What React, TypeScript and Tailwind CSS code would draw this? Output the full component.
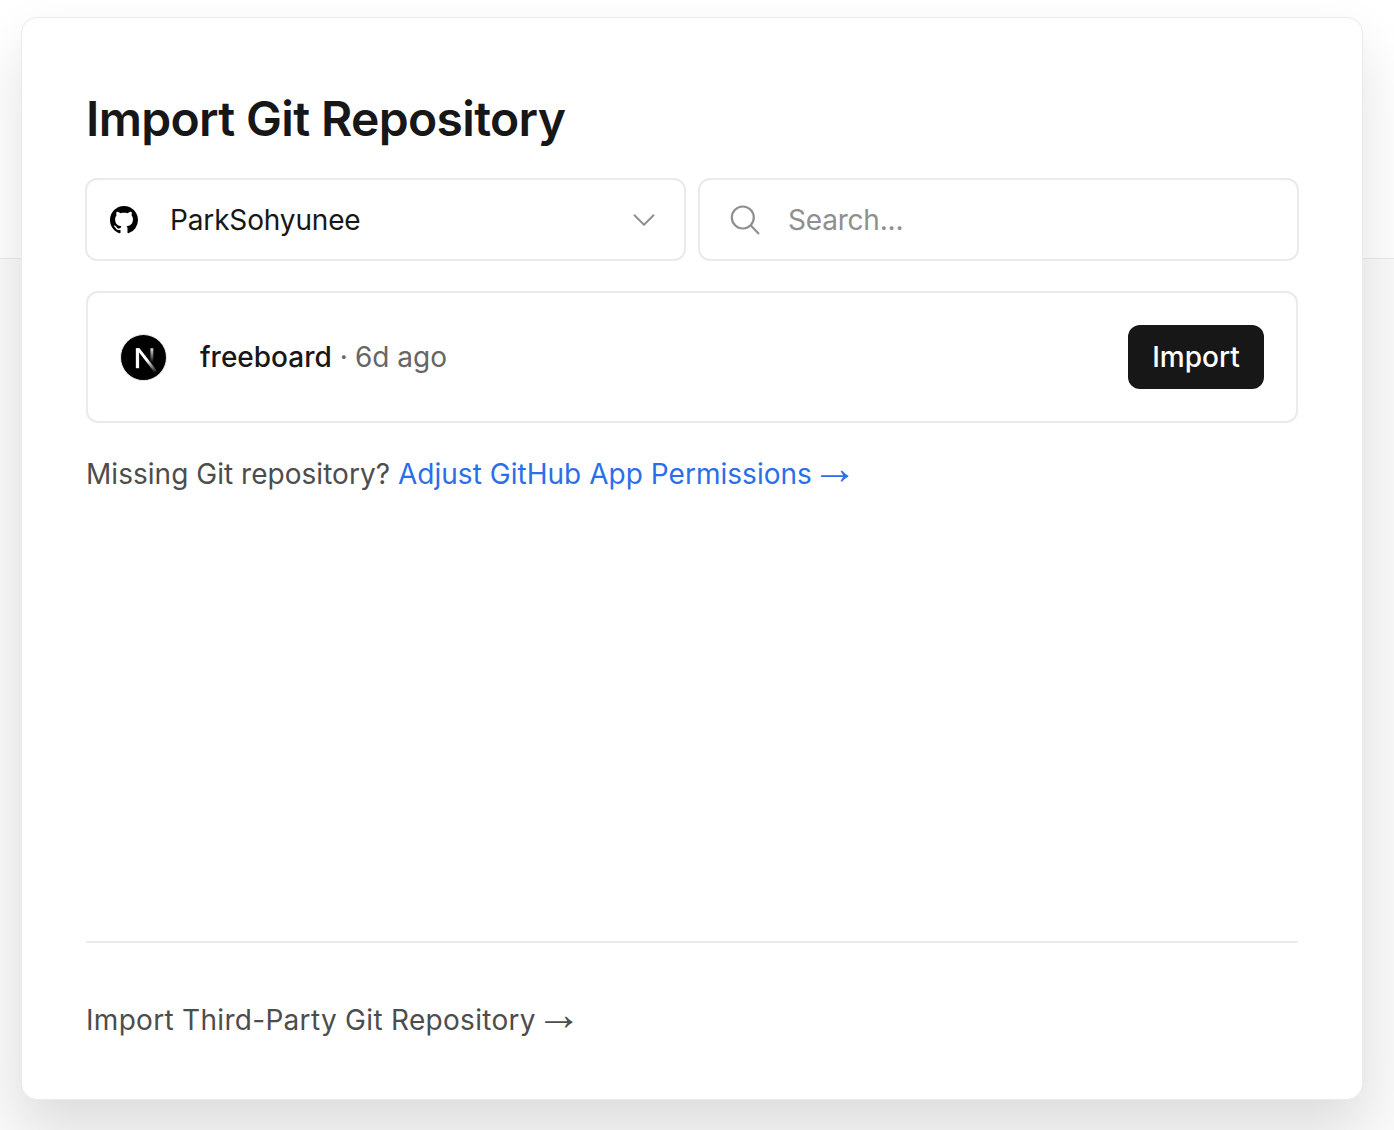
import { ChevronDown } from 'lucide-react';

const GitHubMark = () => (
  <svg viewBox="0 0 16 16" className="w-7 h-7 fill-black">
    <path d="M8 0C3.58 0 0 3.58 0 8c0 3.54 2.29 6.53 5.47 7.59.4.07.55-.17.55-.38 0-.19-.01-.82-.01-1.49-2.01.37-2.53-.49-2.69-.94-.09-.23-.48-.94-.82-1.13-.28-.15-.68-.52-.01-.53.63-.01 1.08.58 1.23.82.72 1.21 1.87.87 2.33.66.07-.52.28-.87.51-1.07-1.78-.2-3.64-.89-3.64-3.95 0-.87.31-1.59.82-2.15-.08-.2-.36-1.02.08-2.12 0 0 .67-.21 2.2.82.64-.18 1.32-.27 2-.27s1.36.09 2 .27c1.53-1.04 2.2-.82 2.2-.82.44 1.1.16 1.92.08 2.12.51.56.82 1.27.82 2.15 0 3.07-1.87 3.75-3.65 3.95.29.25.54.73.54 1.48 0 1.07-.01 1.93-.01 2.2 0 .21.15.46.55.38A8.01 8.01 0 0 0 16 8c0-4.42-3.58-8-8-8z" />
  </svg>
);

const SearchMark = () => (
  <svg viewBox="0 0 30 30" className="w-[30px] h-[30px] shrink-0 fill-none stroke-[#8f8f8f] stroke-[2.2]">
    <circle cx="12.8" cy="12.5" r="11" />
    <path d="M20.8 20.5 29 29" />
  </svg>
);

const NextMark = () => (
  <svg viewBox="0 0 46 46" className="w-[47px] h-[47px] shrink-0">
    <defs>
      <linearGradient id="slash" x1="26" y1="26" x2="36" y2="38" gradientUnits="userSpaceOnUse">
        <stop offset="0" stopColor="#fff" />
        <stop offset="1" stopColor="#fff" stopOpacity="0" />
      </linearGradient>
      <linearGradient id="stem" x1="31" y1="14" x2="31" y2="28" gradientUnits="userSpaceOnUse">
        <stop offset="0" stopColor="#fff" stopOpacity="0.9" />
        <stop offset="1" stopColor="#fff" stopOpacity="0" />
      </linearGradient>
    </defs>
    <circle cx="23" cy="23" r="22.5" fill="#000" stroke="#eaeaea" />
    <rect x="15.5" y="14" width="3.2" height="19.5" fill="#fff" />
    <path d="M15.5 14h3.6L37 37h-3.8z" fill="url(#slash)" />
    <rect x="29.8" y="14" width="2.8" height="14" fill="url(#stem)" />
  </svg>
);

// long thin arrow, its space collapsed so it sits right after the link text
const Arrow = () => (
  <span className="font-['Liberation_Sans',sans-serif] text-[46px] leading-[0] [word-spacing:-13px]"> →</span>
);

export default function App() {
  return (
    <div className="h-[1130px] overflow-hidden pt-[17px] pl-[21px] pr-[31px] bg-[linear-gradient(to_bottom,#fff_0,#fff_258px,#eaeaea_258px,#eaeaea_259px,#fafafa_259px)] font-['Inter',sans-serif]">
      <div className="h-[1083px] bg-white border border-solid border-[#eaeaea] rounded-2xl px-16 pt-[65px] shadow-[0_30px_60px_rgba(0,0,0,0.12)] flex flex-col">
        <h1 className="text-[48px] leading-[72px] font-semibold tracking-[-0.66px] text-[#171717]">
          Import Git Repository
        </h1>

        <div className="grid grid-cols-2 gap-3 -mx-px mt-[23px]">
          <div className="h-[83px] border-2 border-solid border-[#eaeaea] rounded-xl flex items-center pl-[23px] pr-[21px]">
            <GitHubMark />
            <span className="ml-[32px] text-[28px] tracking-[-0.15px] text-[#171717] flex-1">ParkSohyunee</span>
            <ChevronDown className="w-[38px] h-[38px] text-[#8f8f8f]" strokeWidth={1.2} />
          </div>
          <div className="h-[83px] border-2 border-solid border-[#eaeaea] rounded-xl flex items-center pl-[30px]">
            <SearchMark />
            <span className="ml-[28px] text-[28px] tracking-[-0.2px] text-[#8f8f8f]">Search...</span>
          </div>
        </div>

        <div className="mt-[30px] h-[132px] border-2 border-solid border-[#eaeaea] rounded-xl flex items-center pl-[32px] pr-[32px]">
          <NextMark />
          <div className="ml-[33px] flex-1 text-[28px] text-[#666]">
            <span className="text-[#171717] font-medium">freeboard</span>
            <span className="ml-[8px]">·</span>
            <span className="ml-[7px]">6d ago</span>
          </div>
          <button className="h-16 w-[136px] bg-[#171717] text-white text-[28px] font-[450] rounded-xl">
            Import
          </button>
        </div>

        <p className="mt-[31px] text-[28px] leading-[40px] tracking-[0.03px] text-[#4d4d4d]">
          Missing Git repository?{' '}
          <a className="text-[#2b6fe8]">Adjust GitHub App Permissions<Arrow /></a>
        </p>

        <div className="mt-auto border-t-2 border-solid border-[#eaeaea] h-[158px] flex items-start pt-[57px]">
          <a className="text-[28px] leading-[40px] tracking-[0.3px] text-[#4d4d4d]">Import Third-Party Git Repository<Arrow /></a>
        </div>
      </div>
    </div>
  );
}
